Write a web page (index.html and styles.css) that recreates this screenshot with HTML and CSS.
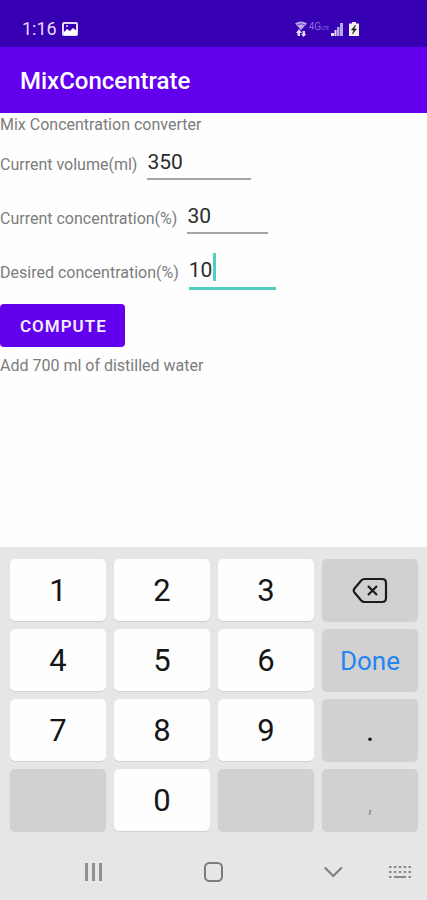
FILE: index.html
```html
<!DOCTYPE html>
<html lang="en">
<head>
<meta charset="utf-8">
<meta name="viewport" content="width=device-width, initial-scale=1">
<title>MixConcentrate</title>
<link rel="stylesheet" href="styles.css">
</head>
<body>
<div class="screen">
  <div class="status">
    <span class="clock">1:16</span>
    <svg class="picture" width="16" height="14" viewBox="0 0 16 14" aria-hidden="true">
      <rect x="1" y="1" width="14" height="12" rx="1" fill="none" stroke="#e4dcf8" stroke-width="2"/>
      <path d="M2 10l3-3 3 2 3-3 4 3v4H2z" fill="#fff"/>
      <circle cx="5" cy="4" r="1" fill="#e4dcf8"/>
    </svg>
    <div class="signals">
      <svg width="12" height="16" viewBox="0 0 12 16" aria-hidden="true">
        <path d="M0 2.500Q6-1.500 12 2.500L6 9z" fill="#b9a8e8"/>
        <path d="M2 4Q6 1.500 10 4" fill="none" stroke="#6b48ca"/>
        <path d="M4 8L7 12H5V15H2.500V12H1zM8.500 16L6 13h1.500v-3h2.500v3H11.500z" fill="#e4dcf8"/>
      </svg>
      <span class="network">4G<small>LTE</small></span>
      <svg width="12" height="13" viewBox="0 0 12 13" aria-hidden="true">
        <path d="M0 10h3v3H0zM3.500 7h2v6h-2z" fill="#e4dcf8"/>
        <path d="M6 4h2.500v9H6zM9 0h3v13H9z" fill="#b9a8e8"/>
      </svg>
      <svg class="battery" width="10" height="14" viewBox="0 0 10 14" aria-hidden="true">
        <path d="M3 0h4v1.500h3V14H0V1.500h3z" fill="#f4f2ee"/>
        <path d="M6.500 3L2.500 8H5L3.500 12 7.500 7H5z" fill="#222" stroke="#222" stroke-width=".6"/>
      </svg>
    </div>
  </div>
  <header class="appbar"><h1>MixConcentrate</h1></header>
  <main class="content">
    <p>Mix Concentration converter</p>
    <form>
      <div class="field">
        <label for="volume">Current volume(ml)</label>
        <input class="wide" id="volume" type="text" inputmode="decimal" value="350">
      </div>
      <div class="field">
        <label for="current">Current concentration(%)</label>
        <input id="current" type="text" inputmode="decimal" value="30">
      </div>
      <div class="field focused">
        <label for="desired">Desired concentration(%)</label>
        <span class="entry"><input id="desired" type="text" inputmode="decimal" value="10"><i class="caret"></i></span>
      </div>
      <button class="compute" type="button">COMPUTE</button>
    </form>
    <p>Add 700 ml of distilled water</p>
  </main>
  <div class="keyboard">
    <div class="keys">
      <button type="button">1</button>
      <button type="button">2</button>
      <button type="button">3</button>
      <button type="button" class="gray" aria-label="Backspace">
        <svg width="36" height="28" viewBox="0 0 36 28" fill="none" stroke="#1c1c1c" stroke-width="2.200" aria-hidden="true">
          <path d="M12.500 2H30Q34 2 34 6V21Q34 25 30 25H12.500Q10.500 25 9.200 23.500L2.500 15.500Q1 13.500 2.500 11.500L9.200 3.500Q10.500 2 12.500 2Z"/>
          <path d="M16 9l9 9M25 9l-9 9"/>
        </svg>
      </button>
      <button type="button">4</button>
      <button type="button">5</button>
      <button type="button">6</button>
      <button type="button" class="gray done">Done</button>
      <button type="button">7</button>
      <button type="button">8</button>
      <button type="button">9</button>
      <button type="button" class="gray">.</button>
      <button type="button" class="gray" disabled aria-label="Blank"></button>
      <button type="button">0</button>
      <button type="button" class="gray" disabled aria-label="Blank"></button>
      <button type="button" class="gray comma" disabled>,</button>
    </div>
    <nav class="navbar">
      <button type="button" aria-label="Recent apps">
        <svg width="20" height="20" viewBox="0 0 20 20" aria-hidden="true"><path d="M2.500 1v18M9.500 1v18M16.500 1v18" stroke="#909090" stroke-width="3"/></svg>
      </button>
      <button type="button" aria-label="Home">
        <svg width="20" height="20" viewBox="0 0 20 20" aria-hidden="true"><rect x="1" y="1" width="17" height="18" rx="4.500" fill="none" stroke="#7c7c7c" stroke-width="2"/></svg>
      </button>
      <button type="button" aria-label="Hide keyboard">
        <svg width="20" height="20" viewBox="0 0 20 20" aria-hidden="true"><path d="M.800 5.500l8.500 8.500 8.500-8.500" fill="none" stroke="#808080" stroke-width="2.200"/></svg>
      </button>
      <button type="button" aria-label="Switch keyboard">
        <svg width="22" height="14" viewBox="0 0 22 14" aria-hidden="true">
          <path d="M0 2h22M0 7h22" stroke="#8a8a8a" stroke-width="2" stroke-dasharray="2.500 2.375"/>
          <path d="M0 12h2.500M5 12h12M19.500 12H22" stroke="#8a8a8a" stroke-width="2"/>
        </svg>
      </button>
    </nav>
  </div>
</div>
</body>
</html>
```
FILE: styles.css
```css
* { box-sizing: border-box; }

body {
  margin: 0;
  background: #fefefe;
  color: #7c7c7c;
  font-family: Roboto, "Liberation Sans", sans-serif;
  font-size: 16px;
  line-height: 24px;
}

button, input { font: inherit; }
h1, p { margin: 0; }
svg { display: block; }

.screen {
  display: flex;
  flex-direction: column;
  min-height: 100vh;
}

.status {
  display: flex;
  align-items: center;
  gap: 5px;
  padding: 17px 68px 6px 22px;
  background: #3700b3;
  color: #e4dcf8;
}
.clock { font-size: 18px; }
.signals {
  display: flex;
  align-items: center;
  gap: 2px;
  margin-left: auto;
}
.network {
  color: #8b70d8;
  font-size: 10px;
  line-height: 12px;
  align-self: flex-start;
}
.network small { font-size: 5px; }
.battery { margin-left: 4px; }

.appbar {
  padding: 18px 20px 16px;
  background: #6200ee;
  color: #fff;
}
.appbar h1 {
  font-size: 24px;
  line-height: 32px;
  font-weight: 500;
}

.content { flex: 1; }

.field {
  display: flex;
  align-items: flex-start;
  gap: 10px;
  height: 54px;
}
.field label { padding-top: 16px; }
.field input {
  width: 81px;
  height: 31px;
  margin-top: 12px;
  padding: 0 0 4px;
  border: 0;
  border-bottom: 2px solid #a4a4a4;
  border-radius: 0;
  outline: 0;
  background: transparent;
  color: #2b2b2b;
  font-size: 21px;
}
.field .wide { width: 104px; }
.entry {
  position: relative;
  display: flex;
}
.field.focused input {
  width: 87px;
  height: 33px;
  border-bottom: 3px solid #50cfc0;
}
.caret {
  position: absolute;
  left: 24px;
  top: 8px;
  width: 3px;
  height: 28px;
  background: #50cfc0;
}

.compute {
  display: block;
  margin: 5px 0 7px;
  padding: 10px 18px 9px 20px;
  border: 0;
  border-radius: 4px;
  background: #6200ee;
  color: #f3ecff;
  font-size: 17px;
  font-weight: 600;
  letter-spacing: 1px;
}

.keyboard { background: #e6e6e6; }
.keys {
  display: grid;
  grid-template-columns: repeat(4, 1fr);
  grid-auto-rows: 62px;
  gap: 8px;
  padding: 12px 9px 0 10px;
}
.keys button {
  display: flex;
  align-items: center;
  justify-content: center;
  padding: 2px 0 0;
  border: 0;
  border-radius: 5px;
  background: #fefefe;
  box-shadow: 0 1px 1px #cfcfcf;
  color: #161616;
  font-size: 31px;
}
.keys .gray { background: #d1d1d1; }
.keys .done {
  color: #2384f5;
  font-size: 26px;
}
.keys .comma {
  padding-top: 10px;
  color: #929292;
  font-size: 20px;
}

.navbar {
  display: grid;
  grid-template-columns: 120fr 120fr 65fr 38fr;
  padding: 17px 0 4px 84px;
}
.navbar button {
  display: flex;
  align-items: center;
  height: 48px;
  padding: 0;
  border: 0;
  background: transparent;
}
```
